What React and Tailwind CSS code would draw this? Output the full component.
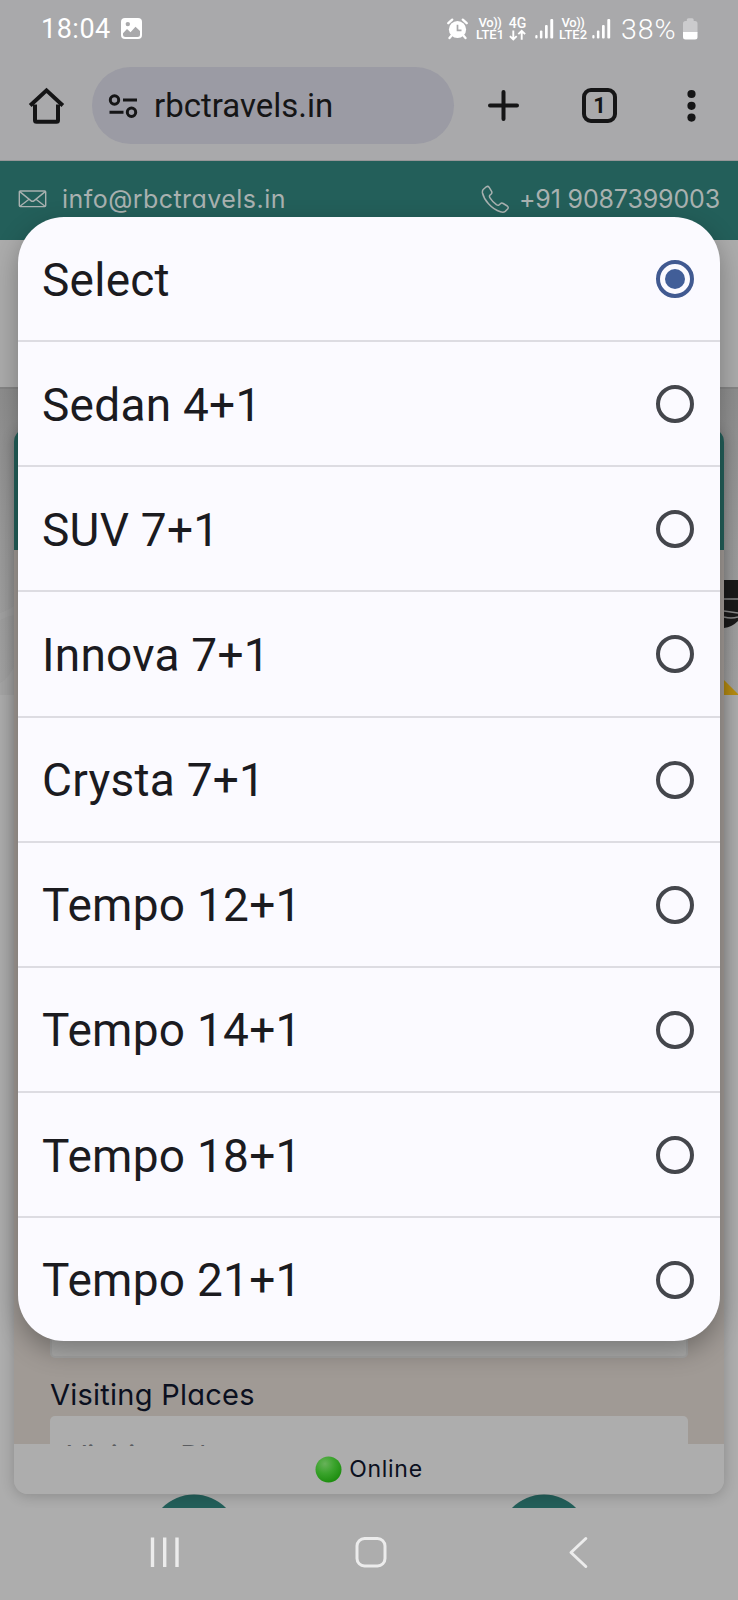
import React from "react";

const options = [
  "Select",
  "Sedan 4+1",
  "SUV 7+1",
  "Innova 7+1",
  "Crysta 7+1",
  "Tempo 12+1",
  "Tempo 14+1",
  "Tempo 18+1",
  "Tempo 21+1",
];

const geo = "font-['Inter',sans-serif] [font-feature-settings:'cv11']";

function VoLte({ label }) {
  return (
    <div className="flex w-[28px] flex-col items-center font-['Roboto',sans-serif] font-medium leading-[12px] text-white">
      <span className="h-[12px] text-[13px] tracking-[-0.4px]">Vo))</span>
      <span className="h-[12px] text-[13px]">{label}</span>
    </div>
  );
}

function Signal() {
  return (
    <svg width="19" height="22" viewBox="0 0 19 22" fill="#fff">
      <rect x="0.3" y="17" width="2.2" height="3.5" rx="1" />
      <rect x="4.9" y="12.5" width="2.5" height="8" rx="1" />
      <rect x="10" y="7" width="2.7" height="13.5" rx="1" />
      <rect x="15.3" y="1" width="2.9" height="19.5" rx="1" />
    </svg>
  );
}

function StatusBar() {
  return (
    <div className="flex h-[57px] items-center pl-[41px] pr-[40px] font-['Roboto',sans-serif] text-white">
      <span className="w-[80px] pt-[1px] text-[27px] leading-[57px] tracking-[0.5px]">18:04</span>
      <svg width="22" height="22" viewBox="0 0 22 22">
        <rect x="0" y="0" width="21" height="21" rx="4" fill="#fff" />
        <circle cx="6.8" cy="6.1" r="2.2" fill="#a9a9ab" />
        <path d="M2 15.3 6 11 9.5 14.3 14.5 8.8 19 13.1V16.5q0 2.5-2.5 2.5H4.5Q2 19 2 16.5Z" fill="#a9a9ab" />
      </svg>
      <div className="ml-auto flex items-center">
        <svg width="21" height="22" viewBox="0 0 21 22">
          <circle cx="10.5" cy="11.5" r="8.6" fill="#fff" />
          <path d="M1.3 5.2 5.2 1.6M19.7 5.2 15.8 1.6M4.6 17.5 2.5 20M16.4 17.5 18.5 20" stroke="#fff" strokeWidth="2.3" strokeLinecap="round" />
          <path d="M10.5 6.8V12.3H14.5" fill="none" stroke="#a9a9ab" strokeWidth="1.7" />
        </svg>
        <div className="ml-[8px]"><VoLte label="LTE1" /></div>
        <div className="ml-[4px] flex w-[19px] flex-col items-center">
          <span className="h-[12px] text-[14px] font-medium leading-[12px]">4G</span>
          <svg width="17" height="12" viewBox="0 0 17 12" fill="none" stroke="#fff" strokeWidth="1.9">
            <path d="M4.3 1.5V10.5M.9 7.1 4.3 10.5 7.7 7.1M12.7 10.8V2M9.3 5.2 12.7 1.8 16.1 5.2" />
          </svg>
        </div>
        <div className="ml-[8px]"><Signal /></div>
        <div className="ml-[5px]"><VoLte label="LTE2" /></div>
        <div className="ml-[5px]"><Signal /></div>
        <span className="ml-[10px] w-[61px] pt-[1px] text-[28.5px] font-[350] leading-[57px] tracking-[1px]">38%</span>
        <svg className="ml-[1px]" width="15" height="22" viewBox="0 0 15 22">
          <path d="M3.8 3V1.8Q3.8.3 5.3.3H9.2Q10.7.3 10.7 1.8V3H12Q14.5 3 14.5 5.5V14.5H0V5.5Q0 3 2.5 3Z" fill="#cbcbcd" />
          <path d="M0 14H14.5V19Q14.5 21.5 12 21.5H2.5Q0 21.5 0 19Z" fill="#fff" />
        </svg>
      </div>
    </div>
  );
}

function Toolbar() {
  return (
    <div className="flex h-[104px] items-start border-b border-[#969698] pt-[10px]">
      <div className="flex h-[77px] w-[92px] items-center pl-[28px]">
        <svg width="38" height="38" viewBox="0 0 38 38" fill="none" stroke="#151516" strokeWidth="4" strokeLinejoin="round">
          <path d="M7 17.5V33.2Q7 34.7 8.5 34.7H28.5Q30 34.7 30 33.2V17.5" />
          <path d="M2.2 18.5 18.5 3.4 34.8 18.5" strokeLinejoin="miter" />
        </svg>
      </div>
      <div className="flex h-[77px] w-[362px] items-center rounded-full bg-[#9b9ba4] pl-[15px]">
        <svg width="32" height="26" viewBox="0 0 32 26" fill="none" stroke="#151516" strokeWidth="3">
          <circle cx="7.5" cy="7" r="4.2" />
          <path d="M16 7H30M2.5 19.3H16.5" />
          <circle cx="24.5" cy="19.3" r="4.2" />
        </svg>
        <span className="ml-[15px] font-['Roboto',sans-serif] text-[33px] leading-[76px] text-[#151516]">rbctravels.in</span>
      </div>
      <div className="flex h-[77px] flex-1 items-center">
        <svg className="ml-[34px]" width="31" height="31" viewBox="0 0 31 31" stroke="#151516" strokeWidth="4" strokeLinecap="round">
          <path d="M2 15.5H29M15.5 2V29" />
        </svg>
        <div className="ml-[63px] flex h-[35px] w-[35px] items-center justify-center rounded-[9px] border-4 border-[#151516] font-['Roboto',sans-serif] text-[22px] font-bold leading-none text-[#151516]">
          1
        </div>
        <svg className="ml-[70px]" width="9" height="34" viewBox="0 0 9 34" fill="#151516">
          <circle cx="4.5" cy="5" r="4.1" />
          <circle cx="4.5" cy="16.8" r="4.1" />
          <circle cx="4.5" cy="28.6" r="4.1" />
        </svg>
      </div>
    </div>
  );
}

function ContactBar() {
  return (
    <div className={"flex h-[79px] items-start justify-between bg-[#235f5a] pl-[18px] pr-[18px] text-[25px] text-[#a9b1b0] " + geo}>
      <div className="flex items-center pt-[18px]">
        <svg width="30" height="20" viewBox="0 0 30 20" fill="none" stroke="#a9b1b0" strokeWidth="1.4">
          <rect x="1.3" y="2" width="26.4" height="15.6" rx="1" />
          <path d="M1.8 2.6 12.8 11.6Q14.5 13 16.2 11.6L27.2 2.6M2 17.2 11 10.2M27 17.2 18 10.2" />
        </svg>
        <span className="ml-[14px] font-normal leading-[40px] tracking-[0.45px]">info@rbctravels.in</span>
      </div>
      <div className="flex items-center pt-[18px]">
        <svg width="29" height="29" viewBox="0 0 29 29" fill="none" stroke="#a9b1b0" strokeWidth="1.5" strokeLinejoin="round">
          <path d="M2.2 4.5 5.3 1.8Q7 .7 8.2 2.4L10.6 6.3Q11.4 8 10 9.2L8.8 10.3Q8 11.3 9 12.8 11.6 16.8 15.4 19.7 17 20.8 18 20L19.4 18.7Q20.6 17.6 22.2 18.5L26.3 21Q28 22.3 26.6 24L24.2 26.4Q22.4 27.8 19.5 26.8 12.8 24.6 7.5 18.7 2.7 13.5 1.5 8 1.1 5.8 2.2 4.5Z" />
        </svg>
        <span className="ml-[9px] font-normal leading-[40px] tracking-[-0.15px]">+91 9087399003</span>
      </div>
    </div>
  );
}

function Backdrop() {
  return (
    <div className="relative flex h-[1268px] flex-col overflow-hidden bg-[#adadad]">
      <div className="h-[149px] shrink-0 border-b-2 border-[#858585] bg-[#acacac]" />
      <div className="flex h-[306px] shrink-0 bg-linear-to-b from-[#8e8e8e] via-[#9b9b9b] to-[#a3a3a3]">
        <svg width="738" height="306" viewBox="0 1 738 306">
          <path d="M0 225Q10 222 18 215V226Q8 228 0 232Z" fill="#a5a5a5" opacity="0.6" />
          <path d="M0 295Q10 290 18 270V307H0Z" fill="#aaaaaa" opacity="0.5" />
          <path d="M724 192H738V233Q732 239 724 240Z" fill="#1b1b1b" />
          <path d="M724 211H738M724 223 738 225M724 229Q731 231 738 229" stroke="#8c8c8c" strokeWidth="1.6" fill="none" />
          <path d="M724 292 738 306V307H724Z" fill="#b88d12" />
        </svg>
      </div>
      <svg className="mt-auto shrink-0" width="738" height="14" viewBox="0 0 738 14">
        <circle cx="194" cy="45.5" r="45" fill="#235f5a" />
        <circle cx="544" cy="45.5" r="45" fill="#235f5a" />
      </svg>
      <div className="absolute left-[14px] top-[188px] flex h-[1066px] w-[710px] flex-col overflow-hidden rounded-[14px] shadow-[0_2px_14px_rgba(0,0,0,0.2)]">
        <div className="h-[122px] shrink-0 bg-[#235f5a]" />
        <div className="flex h-[894px] shrink-0 flex-col justify-end bg-[#a09a95] pl-[36px]">
          <div className="h-[60px] w-[638px] rounded-[5px] border-2 border-[#a3a3a2] bg-[#acacab]" />
          <span className={"h-[58px] pt-[3px] text-[29px] leading-[67px] tracking-[0.25px] text-[#0b1020] " + geo}>Visiting Places</span>
          <div className="relative z-10 mb-[-2px] h-[30px] w-[638px] shrink-0 overflow-hidden rounded-t-[5px] bg-[#adadad] pl-[17px]">
            <span className={"block pt-[20px] text-[28.5px] leading-[40px] tracking-[0.7px] text-[#5a5c60] " + geo}>Visiting Places</span>
          </div>
        </div>
        <div className={"flex h-[50px] shrink-0 items-center justify-center bg-[#adadad] text-[23px] text-[#0b1020] " + geo}>
          <svg width="27" height="27" viewBox="0 0 27 27">
            <defs>
              <radialGradient id="online" cx="0.36" cy="0.28" r="0.75">
                <stop offset="0" stopColor="#68b25a" />
                <stop offset="0.5" stopColor="#3aa32c" />
                <stop offset="1" stopColor="#1c8d0e" />
              </radialGradient>
            </defs>
            <circle cx="13.5" cy="13.5" r="13" fill="url(#online)" />
          </svg>
          <span className="ml-[7px] tracking-[0.7px]">Online</span>
        </div>
      </div>
    </div>
  );
}

function NavBar() {
  return (
    <div className="flex h-[92px] items-start bg-[#adadad] pl-[149px] pt-[28px]">
      <svg width="32" height="34" viewBox="0 0 32 34" fill="none" stroke="#ececec" strokeWidth="3.4">
        <path d="M3.5 1.5V31M15.7 1.5V31M28 1.5V31" />
      </svg>
      <svg className="ml-[174px]" width="34" height="34" viewBox="0 0 34 34" fill="none" stroke="#ececec" strokeWidth="3">
        <rect x="2" y="2.5" width="28" height="27.5" rx="7.5" />
      </svg>
      <svg className="ml-[178px]" width="24" height="34" viewBox="0 0 24 34" fill="none" stroke="#ececec" strokeWidth="3" strokeLinecap="round" strokeLinejoin="round">
        <path d="M18.8 2.5 4 16.5 18.8 30.5" />
      </svg>
    </div>
  );
}

function Radio({ checked }) {
  return (
    <span
      className={
        "flex h-[38px] w-[38px] items-center justify-center rounded-full border-4 " +
        (checked ? "border-[#415a91]" : "border-[#44464c]")
      }
    >
      {checked && <span className="h-5 w-5 rounded-full bg-[#415e98]" />}
    </span>
  );
}

export default function App() {
  return (
    <div className="relative h-[1600px] w-[738px] overflow-hidden bg-[#a9a9ab]">
      <StatusBar />
      <Toolbar />
      <ContactBar />
      <Backdrop />
      <NavBar />
      <div
        role="listbox"
        className="absolute left-[18px] top-[217px] h-[1124px] w-[702px] overflow-hidden rounded-[46px] bg-[#fbfaff] shadow-[0_10px_26px_rgba(0,0,0,0.3)]"
      >
        {options.map((name, i) => (
          <div
            key={name}
            role="option"
            aria-selected={i === 0}
            className="flex h-[125.15px] items-center justify-between border-b-2 border-[#dddce2] pl-[24px] pr-[26px] pt-[1px] last:h-[123px] last:border-b-0 last:pt-0"
          >
            <span className="pt-[1px] font-['Roboto',sans-serif] text-[46px] leading-[60px] tracking-[0.25px] text-[#1b1b1f]">{name}</span>
            <Radio checked={i === 0} />
          </div>
        ))}
      </div>
    </div>
  );
}
